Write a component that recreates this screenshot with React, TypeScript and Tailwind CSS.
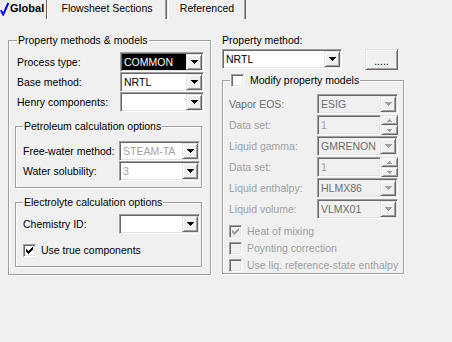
import React from 'react';

const sunken =
  'border border-t-[#a0a0a0] border-l-[#a0a0a0] border-b-white border-r-white shadow-[inset_1px_1px_0_#696969,inset_-1px_-1px_0_#e3e3e3]';
const raised =
  'border border-t-[#e3e3e3] border-l-[#e3e3e3] border-b-[#696969] border-r-[#696969] shadow-[inset_1px_1px_0_#fff,inset_-1px_-1px_0_#a0a0a0]';
const etched = 'border border-[#a0a0a0] shadow-[inset_1px_1px_0_#fff,1px_1px_0_#fff]';

function Arrow({ disabled }: { disabled?: boolean }) {
  const c = disabled ? '#a0a0a0' : '#000';
  return (
    <svg width="7" height="4" viewBox="0 0 7 4" shapeRendering="crispEdges">
      <rect x="0" y="0" width="7" height="1" fill={c} />
      <rect x="1" y="1" width="5" height="1" fill={c} />
      <rect x="2" y="2" width="3" height="1" fill={c} />
      <rect x="3" y="3" width="1" height="1" fill={c} />
    </svg>
  );
}

function SmallArrow({ up }: { up?: boolean }) {
  const c = '#a0a0a0';
  return (
    <svg width="5" height="3" viewBox="0 0 5 3" shapeRendering="crispEdges">
      {up ? (
        <>
          <rect x="2" y="0" width="1" height="1" fill={c} />
          <rect x="1" y="1" width="3" height="1" fill={c} />
          <rect x="0" y="2" width="5" height="1" fill={c} />
        </>
      ) : (
        <>
          <rect x="0" y="0" width="5" height="1" fill={c} />
          <rect x="1" y="1" width="3" height="1" fill={c} />
          <rect x="2" y="2" width="1" height="1" fill={c} />
        </>
      )}
    </svg>
  );
}

function Combo({
  value,
  className,
  selected,
  disabled,
  dim,
}: {
  value?: string;
  className: string;
  selected?: boolean;
  disabled?: boolean;
  dim?: boolean;
}) {
  return (
    <div className={`${sunken} ${className} h-[20px] flex p-[1px] ${disabled ? 'bg-[#f0f0f0]' : 'bg-white'}`}>
      <div className="flex-1 flex items-center min-w-0">
        {selected ? (
          <span className="h-full flex-1 flex items-center bg-black text-white pl-[2px]">{value}</span>
        ) : (
          <span
            className={`pl-[2px] whitespace-nowrap overflow-hidden ${
              dim ? 'text-[#a0a0a0]' : disabled ? 'text-[#6d6d6d]' : 'text-black'
            }`}
          >
            {value}
          </span>
        )}
      </div>
      <div className={`${raised} w-[16px] h-full bg-[#f0f0f0] flex items-center justify-center`}>
        <Arrow disabled={disabled} />
      </div>
    </div>
  );
}

function Spin({ value }: { value: string }) {
  return (
    <div className="w-[81px] h-[20px] flex">
      <div className={`${sunken} flex-1 flex items-center pl-[3px] text-[#a0a0a0] bg-[#f0f0f0]`}>{value}</div>
      <div className="w-[17px] flex flex-col">
        <div className={`${raised} h-[10px] flex items-center justify-center bg-[#f0f0f0]`}>
          <SmallArrow up />
        </div>
        <div className={`${raised} h-[10px] flex items-center justify-center bg-[#f0f0f0]`}>
          <SmallArrow />
        </div>
      </div>
    </div>
  );
}

function Check({ checked, disabled }: { checked?: boolean; disabled?: boolean }) {
  const c = disabled ? '#a0a0a0' : '#000';
  return (
    <div
      className={`${sunken} w-[13px] h-[13px] shrink-0 flex items-center justify-center ${
        disabled ? 'bg-[#f0f0f0]' : 'bg-white'
      }`}
    >
      {checked && (
        <svg width="7" height="7" viewBox="0 0 7 7" shapeRendering="crispEdges">
          <rect x="6" y="0" width="1" height="1" fill={c} />
          <rect x="5" y="1" width="2" height="1" fill={c} />
          <rect x="0" y="2" width="1" height="1" fill={c} />
          <rect x="4" y="2" width="3" height="1" fill={c} />
          <rect x="0" y="3" width="2" height="1" fill={c} />
          <rect x="3" y="3" width="3" height="1" fill={c} />
          <rect x="0" y="4" width="5" height="1" fill={c} />
          <rect x="1" y="5" width="3" height="1" fill={c} />
          <rect x="2" y="6" width="1" height="1" fill={c} />
        </svg>
      )}
    </div>
  );
}

function Row({ label, labelClass, children }: { label: string; labelClass: string; children: React.ReactNode }) {
  return (
    <div className="flex items-center h-[20px]">
      <span className={`${labelClass} whitespace-nowrap`}>{label}</span>
      {children}
    </div>
  );
}

export default function App() {
  return (
    <div className="w-[452px] h-[342px] bg-[#f0f0f0] overflow-hidden text-[10.5px] leading-[13px] text-black whitespace-nowrap font-['Liberation_Sans',Arial,sans-serif]">
      {/* tabs */}
      <div className="flex h-[19px]">
        <div className="w-[47px] flex items-center border-r border-r-[#696969] pb-[2px]">
          <svg width="9" height="14" viewBox="0 0 9 14" className="mt-[1px]">
            <path d="M0.8 8.2 L3.2 12.6 L8.3 1" stroke="#0000ff" strokeWidth="2" fill="none" />
          </svg>
          <span className="font-bold ml-[1px] text-[11px]">Global</span>
        </div>
        <div className="w-[120px] flex items-center justify-center border-l border-l-white border-r border-r-[#696969] shadow-[inset_-1px_0_0_#a0a0a0] pb-[2px]">
          Flowsheet Sections
        </div>
        <div className="w-[1px]" />
        <div className="w-[78px] flex items-center justify-center border-l border-l-white border-r border-r-[#696969] shadow-[inset_-1px_0_0_#a0a0a0] pb-[2px]">
          Referenced
        </div>
      </div>

      <div className="flex items-start pl-[8px]">
        {/* left group */}
        <div className={`${etched} relative mt-[21px] w-[203px] h-[235px] flex flex-col pl-[6px] pt-[11px]`}>
          <span className="absolute left-[8px] top-[-7px] px-[1px] bg-[#f0f0f0]">Property methods &amp; models</span>
          <div className="pl-[2px] flex flex-col">
            <Row label="Process type:" labelClass="w-[103px]">
              <Combo value="COMMON" className="w-[84px]" selected />
            </Row>
            <Row label="Base method:" labelClass="w-[103px]">
              <Combo value="NRTL" className="w-[84px]" />
            </Row>
            <Row label="Henry components:" labelClass="w-[103px]">
              <Combo className="w-[84px]" />
            </Row>
          </div>

          <div className={`${etched} relative mt-[14px] w-[187px] h-[62px] flex flex-col pl-[7px] pt-[14px]`}>
            <span className="absolute left-[7px] top-[-7px] px-[1px] bg-[#f0f0f0]">Petroleum calculation options</span>
            <Row label="Free-water method:" labelClass="w-[96px]">
              <Combo value="STEAM-TA" className="w-[81px]" dim />
            </Row>
            <Row label="Water solubility:" labelClass="w-[96px]">
              <Combo value="3" className="w-[81px]" dim />
            </Row>
          </div>

          <div className={`${etched} relative mt-[14px] w-[187px] h-[65px] flex flex-col pl-[7px] pt-[11px]`}>
            <span className="absolute left-[7px] top-[-7px] px-[1px] bg-[#f0f0f0]">Electrolyte calculation options</span>
            <Row label="Chemistry ID:" labelClass="w-[96px]">
              <Combo className="w-[81px]" />
            </Row>
            <div className="flex items-center mt-[10px] gap-[5px]">
              <Check checked />
              <span>Use true components</span>
            </div>
          </div>
        </div>

        {/* right column */}
        <div className="ml-[11px] mt-[15px] flex flex-col">
          <span>Property method:</span>
          <div className="flex items-start mt-[2px] h-[21px]">
            <Combo value="NRTL" className="w-[120px]" />
            <div className={`${raised} ml-[23px] w-[33px] h-[21px] flex items-end justify-center pb-[4px] bg-[#f0f0f0] leading-[8px]`}>
              .....
            </div>
          </div>

          <div className={`${etched} relative mt-[10px] w-[182px] h-[194px] flex flex-col pl-[6px] pt-[13px]`}>
            <div className="absolute left-[7px] top-[-7px] px-[1px] h-[13px] flex items-center gap-[6px] bg-[#f0f0f0]">
              <Check />
              <span>Modify property models</span>
            </div>
            <div className="flex flex-col gap-[1px]">
              <Row label="Vapor EOS:" labelClass="w-[88px] text-[#6d6d6d]">
                <Combo value="ESIG" className="w-[81px]" disabled />
              </Row>
              <Row label="Data set:" labelClass="w-[88px] text-[#a0a0a0]">
                <Spin value="1" />
              </Row>
              <Row label="Liquid gamma:" labelClass="w-[88px] text-[#a0a0a0]">
                <Combo value="GMRENON" className="w-[81px]" disabled />
              </Row>
              <Row label="Data set:" labelClass="w-[88px] text-[#a0a0a0]">
                <Spin value="1" />
              </Row>
              <Row label="Liquid enthalpy:" labelClass="w-[88px] text-[#a0a0a0]">
                <Combo value="HLMX86" className="w-[81px]" disabled />
              </Row>
              <Row label="Liquid volume:" labelClass="w-[88px] text-[#a0a0a0]">
                <Combo value="VLMX01" className="w-[81px]" disabled />
              </Row>
            </div>
            <div className="flex flex-col gap-[4px] mt-[6px] text-[#a0a0a0]">
              <div className="flex items-center gap-[5px]">
                <Check checked disabled />
                <span>Heat of mixing</span>
              </div>
              <div className="flex items-center gap-[5px]">
                <Check disabled />
                <span>Poynting correction</span>
              </div>
              <div className="flex items-center gap-[5px]">
                <Check disabled />
                <span>Use liq. reference-state enthalpy</span>
              </div>
            </div>
          </div>
        </div>
      </div>
    </div>
  );
}
